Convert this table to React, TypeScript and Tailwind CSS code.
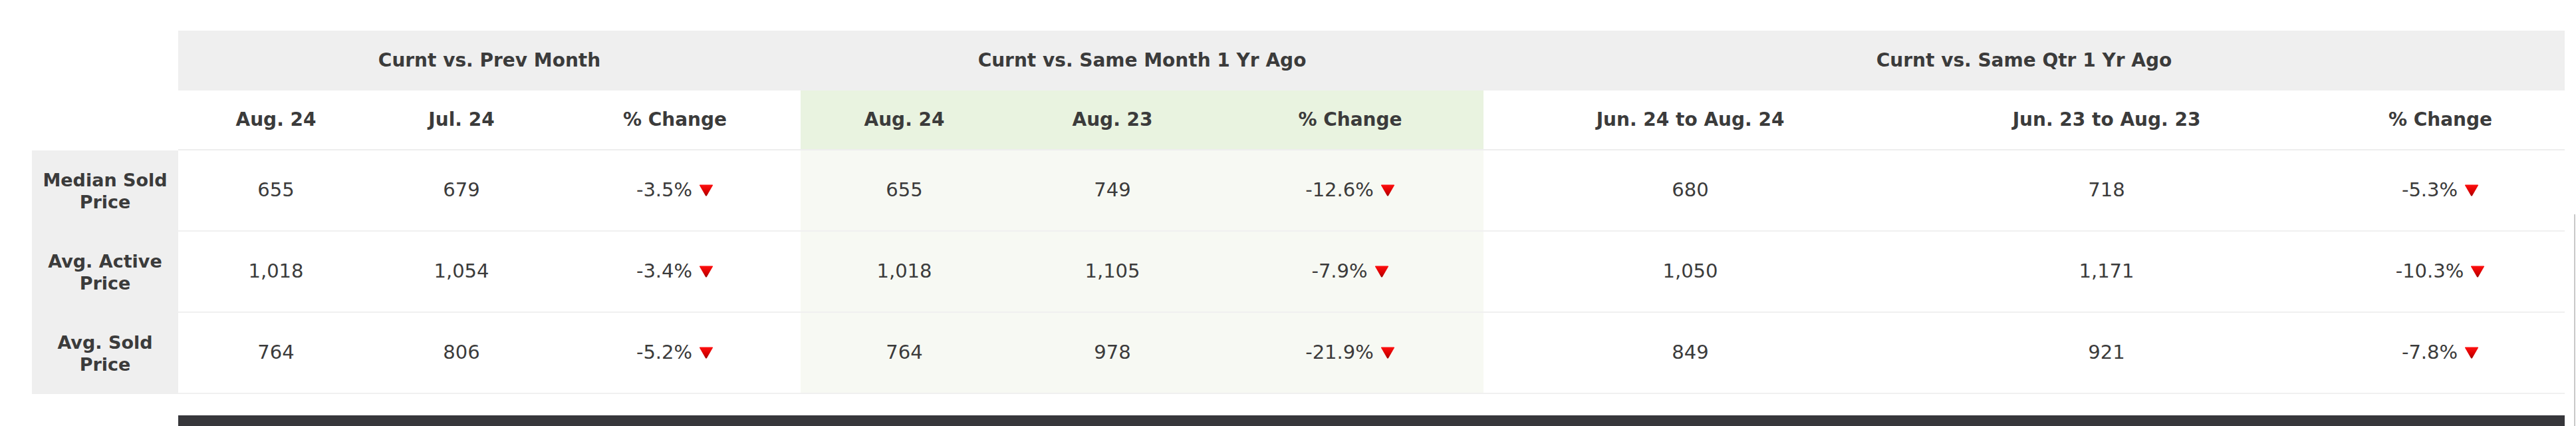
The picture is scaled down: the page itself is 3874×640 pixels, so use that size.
import React from "react";

type Row = {
  label: [string, string];
  values: string[];
};

const rows: Row[] = [
  { label: ["Median Sold", "Price"], values: ["655", "679", "-3.5%", "655", "749", "-12.6%", "680", "718", "-5.3%"] },
  { label: ["Avg. Active", "Price"], values: ["1,018", "1,054", "-3.4%", "1,018", "1,105", "-7.9%", "1,050", "1,171", "-10.3%"] },
  { label: ["Avg. Sold", "Price"], values: ["764", "806", "-5.2%", "764", "978", "-21.9%", "849", "921", "-7.8%"] },
];

const subHeads = ["Aug. 24", "Jul. 24", "% Change", "Aug. 24", "Aug. 23", "% Change", "Jun. 24 to Aug. 24", "Jun. 23 to Aug. 23", "% Change"];

const DownArrow = () => (
  <svg width="22" height="18" viewBox="0 0 22 18" className="inline-block ml-[10px] shrink-0">
    <defs>
      <linearGradient id="redDown" x1="0" y1="0" x2="0" y2="1">
        <stop offset="0" stopColor="#ff1010" />
        <stop offset="0.6" stopColor="#d80000" />
        <stop offset="1" stopColor="#a00000" />
      </linearGradient>
    </defs>
    <path d="M1 1.5 Q0.5 0.5 2 0.5 L20 0.5 Q21.5 0.5 21 1.5 L12 17 Q11 18 10 17 Z" fill="url(#redDown)" />
  </svg>
);

// green shading for the "same month 1 yr ago" group
const isGreen = (i: number) => i >= 3 && i <= 5;

const App: React.FC = () => {
  return (
    <div
      className="relative w-[3874px] h-[640px] bg-white overflow-hidden text-[#3b3b3b]"
      style={{ fontFamily: '"DejaVu Sans", Verdana, sans-serif' }}
    >
      <div className="flex">
        <div className="pt-[46px] pl-[48px] w-[3857px]">
          <div className="grid grid-cols-[220px_294px_264px_378px_312px_314px_401px_622px_630px_374px]">
            {/* group headers */}
            <div className="h-[90px]" />
            {["Curnt vs. Prev Month", "Curnt vs. Same Month 1 Yr Ago", "Curnt vs. Same Qtr 1 Yr Ago"].map((g) => (
              <div key={g} className="col-span-3 h-[90px] bg-[#efefef] flex items-center justify-center text-[28px] font-bold">
                {g}
              </div>
            ))}

            {/* sub headers */}
            <div className="h-[90px]" />
            {subHeads.map((h, i) => (
              <div
                key={i}
                className={`h-[90px] flex items-center justify-center text-[28px] font-bold border-b-2 border-[#eeeeee] ${
                  isGreen(i) ? "bg-[#e9f3e0]" : "bg-white"
                }`}
              >
                {h}
              </div>
            ))}

            {/* data rows */}
            {rows.map((r) => (
              <React.Fragment key={r.label[0]}>
                <div className="h-[122px] bg-[#efefef] flex flex-col items-center justify-center text-[27px] font-bold leading-[33px] text-center">
                  <span>{r.label[0]}</span>
                  <span>{r.label[1]}</span>
                </div>
                {r.values.map((v, i) => (
                  <div
                    key={i}
                    className={`h-[122px] flex items-center justify-center text-[29px] border-b-2 border-[#f0f0f0] ${
                      isGreen(i) ? "bg-[#f7f9f3]" : "bg-white"
                    }`}
                  >
                    <span>{v}</span>
                    {i % 3 === 2 && <DownArrow />}
                  </div>
                ))}
              </React.Fragment>
            ))}
          </div>

          {/* dark footer bar */}
          <div className="ml-[220px] mt-[32px] h-[40px] bg-[#37373b]" />
        </div>

        {/* page edge line */}
        <div className="ml-[14px] mt-[322px] w-[2px] h-[400px] bg-[#c8c8c8]" />
      </div>
    </div>
  );
};

export default App;
